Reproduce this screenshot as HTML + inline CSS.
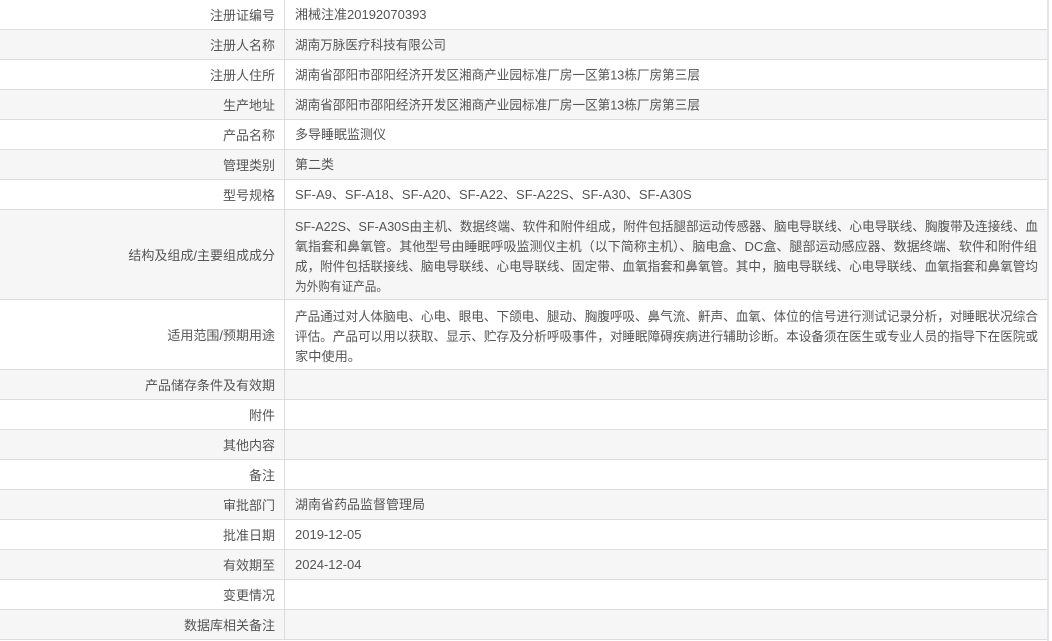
<!DOCTYPE html>
<html><head><meta charset="utf-8"><style>
body{margin:0;width:1052px;height:641px;background:#fff;font-family:"Liberation Sans","Noto Sans CJK SC",sans-serif;font-size:13px;color:#555;overflow:hidden;position:relative}
.r{position:absolute;left:0;width:1048px;border-bottom:1px solid #ddd;box-sizing:border-box}
.g{background:#f6f6f6}
.l{position:absolute;left:0;width:285px;top:0;bottom:0;border-right:1px solid #ddd;box-sizing:border-box;text-align:right;padding-right:9px;display:flex;align-items:center;justify-content:flex-end}
.v{position:absolute;left:295px;right:0;top:0;bottom:0;display:flex;align-items:center;white-space:nowrap;line-height:20px}
svg.t{position:absolute;left:0;top:0;overflow:visible}
svg.t text{font-family:"Liberation Sans","Noto Sans CJK SC",sans-serif;font-size:13px;fill:#555}
.edge{position:absolute;left:1047px;top:0;width:2px;height:641px;background:#e4e4ea}
</style></head><body>
<div class="r" style="top:0;height:30px"><div class="l">注册证编号</div><div class="v">湘械注准20192070393</div></div>
<div class="r g" style="top:30px;height:30px"><div class="l">注册人名称</div><div class="v"><svg class="t" width="760" height="30"><text x="0" y="19.5" textLength="151" lengthAdjust="spacingAndGlyphs">湖南万脉医疗科技有限公司</text></svg></div></div>
<div class="r" style="top:60px;height:30px"><div class="l">注册人住所</div><div class="v"><svg class="t" width="760" height="30"><text x="0" y="19.5" textLength="405" lengthAdjust="spacingAndGlyphs">湖南省邵阳市邵阳经济开发区湘商产业园标准厂房一区第13栋厂房第三层</text></svg></div></div>
<div class="r g" style="top:90px;height:30px"><div class="l">生产地址</div><div class="v"><svg class="t" width="760" height="30"><text x="0" y="19.5" textLength="405" lengthAdjust="spacingAndGlyphs">湖南省邵阳市邵阳经济开发区湘商产业园标准厂房一区第13栋厂房第三层</text></svg></div></div>
<div class="r" style="top:120px;height:30px"><div class="l">产品名称</div><div class="v">多导睡眠监测仪</div></div>
<div class="r g" style="top:150px;height:30px"><div class="l">管理类别</div><div class="v">第二类</div></div>
<div class="r" style="top:180px;height:30px"><div class="l">型号规格</div><div class="v">SF-A9、SF-A18、SF-A20、SF-A22、SF-A22S、SF-A30、SF-A30S</div></div>
<div class="r g" style="top:210px;height:90px"><div class="l">结构及组成/主要组成成分</div><div class="v"><svg class="t" width="760" height="90">
<text x="0" y="21" textLength="743" lengthAdjust="spacingAndGlyphs">SF-A22S、SF-A30S由主机、数据终端、软件和附件组成，附件包括腿部运动传感器、脑电导联线、心电导联线、胸腹带及连接线、血</text>
<text x="0" y="41" textLength="742" lengthAdjust="spacingAndGlyphs">氧指套和鼻氧管。其他型号由睡眠呼吸监测仪主机（以下简称主机）、脑电盒、DC盒、腿部运动感应器、数据终端、软件和附件组</text>
<text x="0" y="61" textLength="743" lengthAdjust="spacingAndGlyphs">成，附件包括联接线、脑电导联线、心电导联线、固定带、血氧指套和鼻氧管。其中，脑电导联线、心电导联线、血氧指套和鼻氧管均</text>
<text x="0" y="81" textLength="93" lengthAdjust="spacingAndGlyphs">为外购有证产品。</text>
</svg></div></div>
<div class="r" style="top:300px;height:70px"><div class="l">适用范围/预期用途</div><div class="v"><svg class="t" width="760" height="70">
<text x="0" y="21" textLength="743" lengthAdjust="spacingAndGlyphs">产品通过对人体脑电、心电、眼电、下颌电、腿动、胸腹呼吸、鼻气流、鼾声、血氧、体位的信号进行测试记录分析，对睡眠状况综合</text>
<text x="0" y="41" textLength="743" lengthAdjust="spacingAndGlyphs">评估。产品可以用以获取、显示、贮存及分析呼吸事件，对睡眠障碍疾病进行辅助诊断。本设备须在医生或专业人员的指导下在医院或</text>
<text x="0" y="61" textLength="66" lengthAdjust="spacingAndGlyphs">家中使用。</text>
</svg></div></div>
<div class="r g" style="top:370px;height:30px"><div class="l">产品储存条件及有效期</div><div class="v"></div></div>
<div class="r" style="top:400px;height:30px"><div class="l">附件</div><div class="v"></div></div>
<div class="r g" style="top:430px;height:30px"><div class="l">其他内容</div><div class="v"></div></div>
<div class="r" style="top:460px;height:30px"><div class="l">备注</div><div class="v"></div></div>
<div class="r g" style="top:490px;height:30px"><div class="l">审批部门</div><div class="v">湖南省药品监督管理局</div></div>
<div class="r" style="top:520px;height:30px"><div class="l">批准日期</div><div class="v">2019-12-05</div></div>
<div class="r g" style="top:550px;height:30px"><div class="l">有效期至</div><div class="v">2024-12-04</div></div>
<div class="r" style="top:580px;height:30px"><div class="l">变更情况</div><div class="v"></div></div>
<div class="r g" style="top:610px;height:30px"><div class="l">数据库相关备注</div><div class="v"></div></div>
<div class="edge"></div>
</body></html>
